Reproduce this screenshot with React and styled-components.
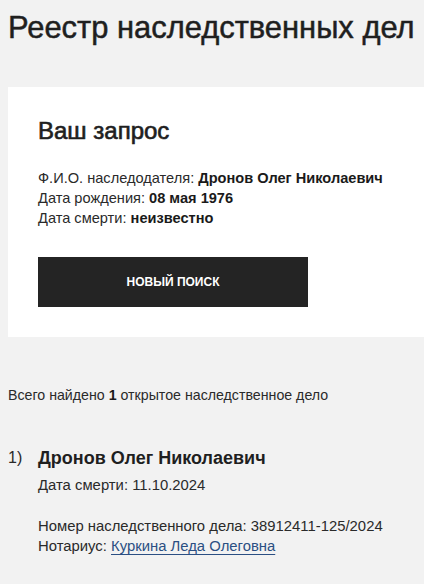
import React from 'react';
import styled, { createGlobalStyle } from 'styled-components';

const GlobalStyle = createGlobalStyle`
  html, body {
    margin: 0;
    padding: 0;
    background: #f2f2f2;
    overflow: hidden;
  }
  body {
    font-family: "Liberation Sans", Arial, sans-serif;
    color: #222;
  }
`;

const Page = styled.div`
  padding: 8px 0 0 8px;
`;

const Title = styled.h1`
  margin: 0;
  font-size: 30.9px;
  line-height: 40px;
  font-weight: 400;
  color: #1f1f1f;
  -webkit-text-stroke: 0.5px #1f1f1f;
  white-space: nowrap;
`;

const Card = styled.section`
  margin-top: 39px;
  margin-right: -20px;
  background: #fff;
  padding: 28px 30px 30px;
  height: 250px;
  box-sizing: border-box;
`;

const CardTitle = styled.h2`
  margin: 0;
  font-size: 24px;
  line-height: 32px;
  font-weight: 400;
  -webkit-text-stroke: 0.65px #1f1f1f;
  color: #1f1f1f;
`;

const InfoList = styled.div`
  margin-top: 21px;
  font-size: 14.6px;
  line-height: 20px;
  color: #2a2a2a;
`;

const InfoRow = styled.div``;

const Value = styled.b`
  font-weight: 700;
  color: #1a1a1a;
`;

const Button = styled.button`
  display: flex;
  align-items: center;
  justify-content: center;
  margin-top: 29px;
  width: 270px;
  height: 50px;
  border: 0;
  background: #242424;
  color: #fff;
  font-family: "Liberation Sans", Arial, sans-serif;
  font-size: 12px;
  font-weight: 700;
  text-transform: uppercase;
  cursor: pointer;
`;

const Summary = styled.p`
  margin: 48px 0 0;
  font-size: 14.2px;
  line-height: 20px;
  color: #2a2a2a;
`;

const Result = styled.div`
  display: grid;
  grid-template-columns: 30px 1fr;
  margin-top: 41px;
`;

const Index = styled.div`
  font-size: 16px;
  line-height: 24px;
  color: #2a2a2a;
`;

const ResultBody = styled.div``;

const Name = styled.div`
  font-size: 18px;
  line-height: 24px;
  font-weight: 700;
  color: #1f1f1f;
`;

const Line = styled.div`
  font-size: 14.85px;
  line-height: 20px;
  color: #2a2a2a;
  margin-top: ${p => p.$gap || 0}px;
`;

const NotaryLink = styled.a`
  color: #2b4f83;
  text-decoration: underline;
  text-underline-offset: 3px;
  text-decoration-thickness: 1px;
`;

export default function App() {
  return (
    <>
      <GlobalStyle />
      <Page>
        <Title>Реестр наследственных дел</Title>
        <Card>
          <CardTitle>Ваш запрос</CardTitle>
          <InfoList>
            <InfoRow>Ф.И.О. наследодателя: <Value>Дронов Олег Николаевич</Value></InfoRow>
            <InfoRow>Дата рождения: <Value>08 мая 1976</Value></InfoRow>
            <InfoRow>Дата смерти: <Value>неизвестно</Value></InfoRow>
          </InfoList>
          <Button>Новый поиск</Button>
        </Card>
        <Summary>Всего найдено <Value>1</Value> открытое наследственное дело</Summary>
        <Result>
          <Index>1)</Index>
          <ResultBody>
            <Name>Дронов Олег Николаевич</Name>
            <Line $gap={5}>Дата смерти: 11.10.2024</Line>
            <Line $gap={21}>Номер наследственного дела: 38912411-125/2024</Line>
            <Line>Нотариус: <NotaryLink href="#">Куркина Леда Олеговна</NotaryLink></Line>
          </ResultBody>
        </Result>
      </Page>
    </>
  );
}
